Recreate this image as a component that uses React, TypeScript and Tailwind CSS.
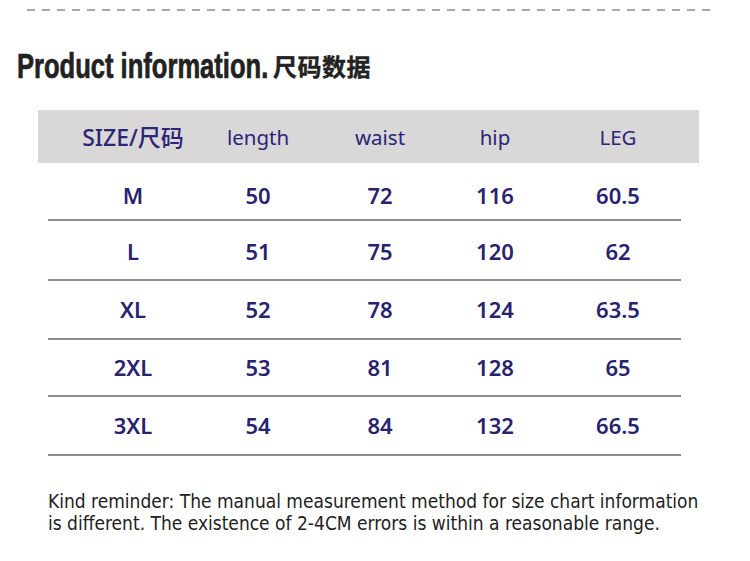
import React from 'react';

const rows = [
  { h: 58, pt: 8, c: ['M', '50', '72', '116', '60.5'] },
  { h: 60, pt: 2, c: ['L', '51', '75', '120', '62'] },
  { h: 59, pt: 0, c: ['XL', '52', '78', '124', '63.5'] },
  { h: 57, pt: 0, c: ['2XL', '53', '81', '128', '65'] },
  { h: 59, pt: 0, c: ['3XL', '54', '84', '132', '66.5'] },
];

const heads = ['SIZE/尺码', 'length', 'waist', 'hip', 'LEG'];

const cols = 'grid grid-cols-[122px_128px_116px_114px_132px]';

export default function App() {
  return (
    <div className="w-[750px] h-[561px] bg-white overflow-hidden relative">
      {/* dashed divider */}
      <div className="pt-[9px] px-[27px]">
        <div className="h-[2px] w-[688px] bg-[repeating-linear-gradient(90deg,#a8a8a8_0px,#a8a8a8_8px,transparent_8px,transparent_15px)]" />
      </div>

      {/* title */}
      <div className="pl-[17px] mt-[35px] h-[40px] flex items-center text-[#222]">
        <div className="w-[256px] whitespace-nowrap">
          <span
            className="inline-block font-bold text-[35px] leading-none origin-left scale-x-[0.73] [-webkit-text-stroke:0.7px_#222]"
            style={{ fontFamily: '"Liberation Sans Narrow", "Liberation Sans", sans-serif' }}
          >
            Product information.
          </span>
        </div>
        <span
          className="font-bold text-[24px] leading-none tracking-[0.5px] [-webkit-text-stroke:0.4px_#222]"
          style={{ fontFamily: '"Noto Sans CJK SC", sans-serif' }}
        >
          尺码数据
        </span>
      </div>

      {/* table */}
      <div className="mt-[24px] ml-[38px] w-[661px]">
        <div
          className={`${cols} h-[53px] bg-[#d9d7d8] items-center pl-[34px] pt-[1px] text-[#2a2577] text-[20.5px]`}
          style={{ fontFamily: '"Noto Sans", "Noto Sans CJK SC", sans-serif' }}
        >
          {heads.map((h) => (
            <div
              key={h}
              className={`text-center ${h === 'SIZE/尺码' ? 'font-medium text-[23px]' : 'font-normal'}`}
            >
              {h}
            </div>
          ))}
        </div>

        <div className="ml-[10px] w-[633px]">
          {rows.map((r) => (
            <div
              key={r.c[0]}
              className={`${cols} items-center pl-[24px] border-b-2 border-[#8c8c8c] text-[#28236f] text-[22px] font-semibold`}
              style={{ height: r.h, paddingTop: r.pt, fontFamily: '"Noto Sans", sans-serif' }}
            >
              {r.c.map((c, i) => (
                <div key={i} className="text-center">
                  {c}
                </div>
              ))}
            </div>
          ))}
        </div>

        <p
          className="mt-[34px] ml-[10px] text-[19px] leading-[22px] text-[#222] w-[656px]"
          style={{ fontFamily: '"DejaVu Sans Condensed", "Liberation Sans Narrow", sans-serif' }}
        >
          Kind reminder: The manual measurement method for size chart information is different. The existence of 2-4CM errors is within a reasonable range.
        </p>
      </div>
    </div>
  );
}
